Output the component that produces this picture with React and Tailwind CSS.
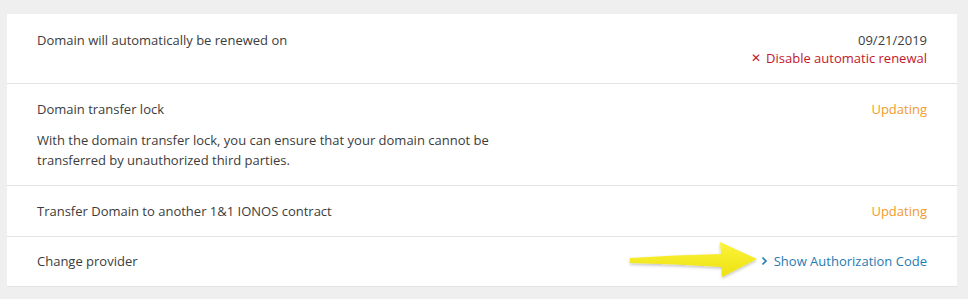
export default function App() {
  const font = { fontFamily: '"Open Sans", "Liberation Sans", sans-serif' };
  return (
    <div className="w-[968px] h-[299px] bg-[#efefef] pt-[14px] pl-[7px] overflow-hidden relative" style={font}>
      <div className="w-[950px] bg-white text-[13px] text-[#3c3c3c] border-b border-[#e3e3e3]">
        <div className="flex justify-between px-[30px] pt-[17px] pb-[16px] leading-[18px] border-b border-[#e3e3e3]">
          <div>Domain will automatically be renewed on</div>
          <div className="flex flex-col items-end">
            <div>09/21/2019</div>
            <div className="text-[#c3172c] flex items-center gap-[5px]">
              <span className="text-[12px]">✕</span>
              <span>Disable automatic renewal</span>
            </div>
          </div>
        </div>
        <div className="flex justify-between px-[30px] pt-[16px] pb-[15px] border-b border-[#e3e3e3]">
          <div>
            <div className="leading-[18px]">Domain transfer lock</div>
            <div className="mt-[12px] leading-[20px] max-w-[465px]">
              With the domain transfer lock, you can ensure that your domain cannot be transferred by unauthorized third parties.
            </div>
          </div>
          <div className="text-[#f39a2b] leading-[18px]">Updating</div>
        </div>
        <div className="flex justify-between px-[30px] py-[16px] leading-[18px] border-b border-[#e3e3e3]">
          <div>Transfer Domain to another 1&amp;1 IONOS contract</div>
          <div className="text-[#f39a2b]">Updating</div>
        </div>
        <div className="flex justify-between px-[30px] pt-[15px] pb-[16px] leading-[18px]">
          <div>Change provider</div>
          <div className="text-[#1f7bb3] flex items-center gap-[6px]">
            <svg width="7" height="10" viewBox="0 0 7 10">
              <path d="M1.5 1.5 L5 5 L1.5 8.5" fill="none" stroke="#1f7bb3" strokeWidth="1.6" />
            </svg>
            <span>Show Authorization Code</span>
          </div>
        </div>
      </div>
      <svg className="absolute left-[625px] top-[238px]" width="140" height="45" viewBox="0 0 140 45">
        <defs>
          <filter id="sh" x="-10%" y="-20%" width="130%" height="150%">
            <feDropShadow dx="0" dy="1.5" stdDeviation="1.5" floodColor="#000" floodOpacity="0.25" />
          </filter>
          <linearGradient id="yg" x1="0" y1="0" x2="0" y2="1">
            <stop offset="0" stopColor="#fbf43a" />
            <stop offset="1" stopColor="#eee013" />
          </linearGradient>
        </defs>
        <path
          d="M5 20 Q50 17 96 16 L95 4 L132 21 L97 39 L97 29 Q50 26 5 25 Z"
          fill="url(#yg)"
          filter="url(#sh)"
          strokeLinejoin="round"
        />
      </svg>
    </div>
  );
}
